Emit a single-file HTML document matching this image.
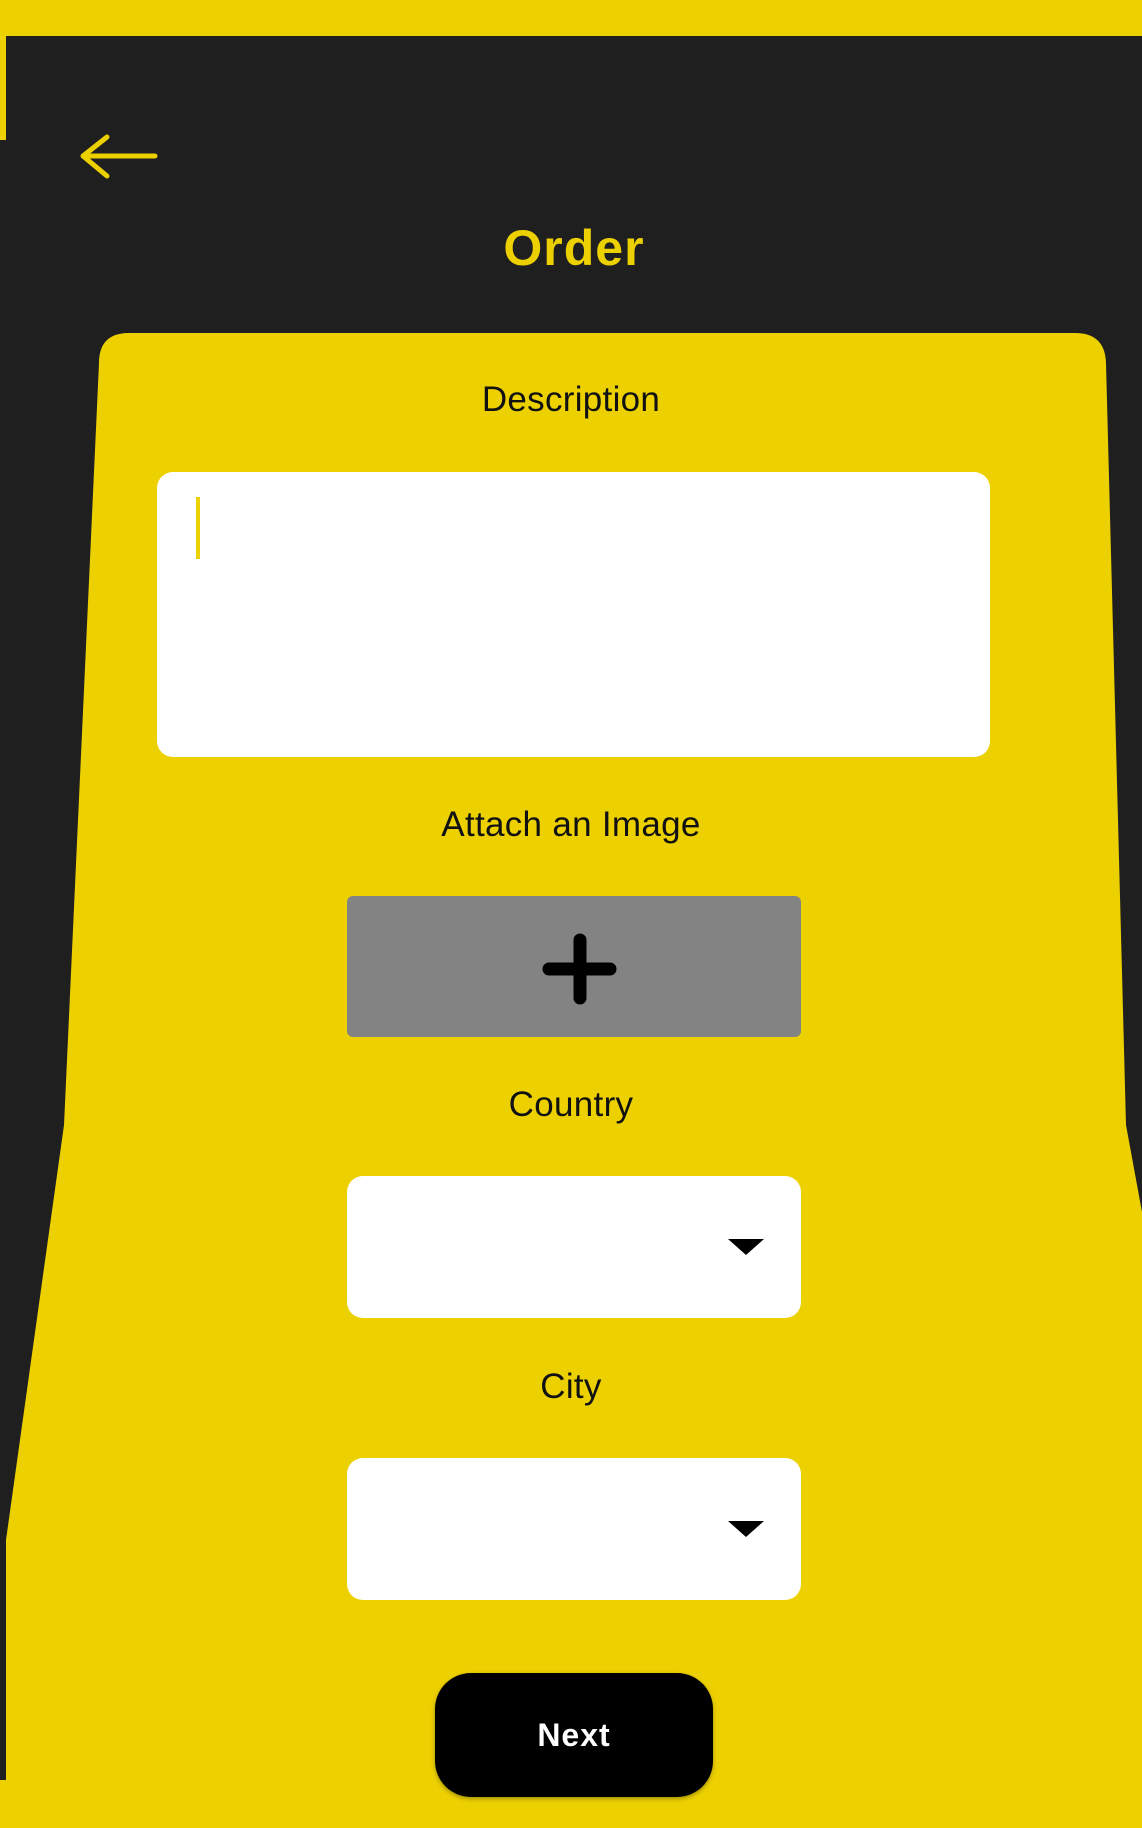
<!DOCTYPE html>
<html><head><meta charset="utf-8"><style>
html,body{margin:0;padding:0}
body{width:1142px;height:1828px;position:relative;overflow:hidden;background:#1f1f1f;font-family:"Liberation Sans",sans-serif}
.abs{position:absolute}
.lbl{position:absolute;left:0;width:1142px;text-align:center;color:#111;font-size:35px;letter-spacing:0.3px;line-height:40px}
.sel{position:absolute;left:347px;width:454px;height:142px;background:#fff;border-radius:16px}
.car{position:absolute;left:381px;top:63px;width:0;height:0;border-left:18px solid transparent;border-right:18px solid transparent;border-top:16px solid #000}
</style></head><body>
<div class="abs" style="left:0;top:0;width:1142px;height:36px;background:#ecd000"></div>
<div class="abs" style="left:0;top:36px;width:6px;height:104px;background:#ecd000"></div>
<svg class="abs" style="left:0;top:0" width="1142" height="1828">
<path d="M99 363 Q99 333 129 333 L1075 333 Q1105 333 1106 363 L1126 1125 L1142 1212 L1142 1828 L0 1828 L0 1780 L6 1780 L6 1540 L64 1125 Z" fill="#ecd000"/>
<path d="M155 156 L83 156 M107 137 L83 156 L107 176" stroke="#ecd000" stroke-width="5" fill="none" stroke-linecap="round" stroke-linejoin="round"/>
</svg>
<div class="abs" style="left:0;width:1148px;top:218px;text-align:center;color:#ecd000;font-weight:bold;font-size:50px;letter-spacing:1px;line-height:60px">Order</div>
<div class="lbl" style="top:380px">Description</div>
<div class="abs" style="left:157px;top:472px;width:833px;height:285px;background:#fff;border-radius:16px"></div>
<div class="abs" style="left:196px;top:497px;width:4px;height:62px;background:#ecd000"></div>
<div class="lbl" style="top:805px">Attach an Image</div>
<div class="abs" style="left:347px;top:896px;width:454px;height:141px;background:#838383;border-radius:6px"></div>
<svg class="abs" style="left:0;top:0" width="1142" height="1828"><path d="M549 969 L610 969 M580 940 L580 998" stroke="#000" stroke-width="13" stroke-linecap="round"/></svg>
<div class="lbl" style="top:1085px">Country</div>
<div class="sel" style="top:1176px"><div class="car"></div></div>
<div class="lbl" style="top:1367px">City</div>
<div class="sel" style="top:1458px"><div class="car"></div></div>
<div class="abs" style="left:435px;top:1673px;width:278px;height:124px;background:#000;border-radius:36px;color:#fff;font-weight:bold;font-size:32px;letter-spacing:1px;text-align:center;line-height:124px;box-shadow:0 2px 4px rgba(0,0,0,.3)">Next</div>
</body></html>
